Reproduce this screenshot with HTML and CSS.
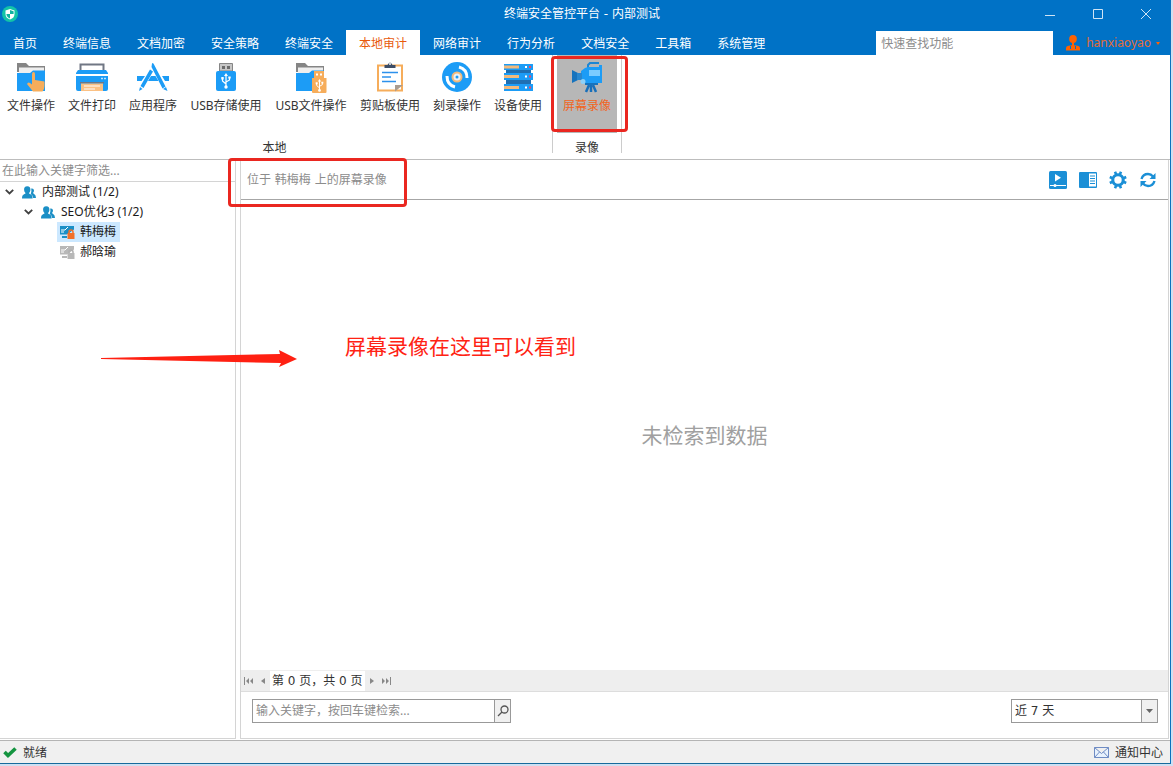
FILE: index.html
```html
<!DOCTYPE html>
<html lang="zh-CN">
<head>
<meta charset="utf-8">
<meta name="viewport" content="width=device-width, initial-scale=1">
<title>终端安全管控平台 - 内部测试</title>
<link rel="stylesheet" href="styles.css">
</head>
<body>
<svg class="defs" aria-hidden="true">
  <symbol id="users" viewBox="0 0 14 13"><path fill="#1b8fc6" d="M9.200 2.500q2.600-.5 2.800 2 0 1.400-.9 2.200.1.800 1 1.200Q14 8.800 14 12h-2.800Q11 9.300 8.800 8 9.900 5 9.200 2.500z"/><path fill="#1b8fc6" d="M5.200.3C7.600.3 8.600 1.800 8.400 3.900 8.300 5.200 7.700 6.200 7 6.900q0 .8 1.100 1.200c1.800.8 2.500 1.600 2.500 4.400H0c0-2.800.7-3.600 2.500-4.400Q3.500 7.700 3.500 6.900 2.200 5.700 2.100 3.900C1.900 1.800 2.900.3 5.200.3z"/></symbol>
  <symbol id="chevron" viewBox="0 0 9 6"><path d="M.8 .8 4.500 4.500 8.200 .8" fill="none" stroke="#404040" stroke-width="1.800"/></symbol>
  <symbol id="folder" viewBox="0 0 28 28"><path fill="#858585" d="M0 0h9l3 3h16v6H0z"/><path fill="#eee" d="M2 4.500h25V12H2z"/><path fill="#1c9cf6" d="M0 10h13l3-2.500h12V28H0z"/></symbol>
  <symbol id="usb-mark" viewBox="0 0 10 16"><path d="M5 2v11M5 11 1.500 8V5M5 9l3.500-2V4.500" fill="none" stroke="#fff" stroke-width="1.200"/><path fill="#fff" d="M5 0l2 3H3zM.3 4h2.400v2.400H.3zM7.300 3.500h2.400v2H7.300z"/><circle cx="5" cy="14" r="1.700" fill="#fff"/></symbol>
</svg>
<div class="window">
  <header class="header">
    <div class="titlebar">
      <svg class="logo" viewBox="0 0 16 16" aria-hidden="true"><circle cx="8" cy="8" r="8" fill="#13c3a8"/><path d="M8 3 12.500 4.500V8q0 4-4.500 5.500Q3.500 12 3.500 8V4.500z" fill="#fff"/><path d="M8 4v4h3.600V5.200zM8 8H4.400q.2 3 3.600 4.500z" fill="#10b2a0"/></svg>
      <h1 class="title">终端安全管控平台 - 内部测试</h1>
      <div class="winbuttons">
        <button class="winbtn" aria-label="最小化"><svg viewBox="0 0 12 12"><path d="M1 7.500h10"/></svg></button>
        <button class="winbtn" aria-label="最大化"><svg viewBox="0 0 12 12"><path d="M1.500 1.500h9v9h-9z"/></svg></button>
        <button class="winbtn" aria-label="关闭"><svg viewBox="0 0 12 12"><path d="M1 1l10 10M11 1 1 11"/></svg></button>
      </div>
    </div>
    <div class="tabrow">
      <nav class="tabs">
        <a class="tab" href="#">首页</a><a class="tab" href="#">终端信息</a><a class="tab" href="#">文档加密</a><a class="tab" href="#">安全策略</a><a class="tab" href="#">终端安全</a><a class="tab active" href="#" aria-current="page">本地审计</a><a class="tab" href="#">网络审计</a><a class="tab" href="#">行为分析</a><a class="tab" href="#">文档安全</a><a class="tab" href="#">工具箱</a><a class="tab" href="#">系统管理</a>
      </nav>
      <input class="quickfind" type="text" placeholder="快速查找功能" aria-label="快速查找功能">
      <button class="user">
        <svg class="avatar" viewBox="0 0 14 16" aria-hidden="true"><ellipse cx="7" cy="4" rx="3.800" ry="3.900"/><path d="M6 7.500h2v2.700l3.500.6Q14 11.300 14 13v2.500H0V13q0-1.700 2.500-2.200l3.500-.6z"/><path d="M4.500 11v3M9.500 11v3" stroke="#0072c6" fill="none"/></svg>
        <span>hanxiaoyao</span>
        <svg class="caret" viewBox="0 0 4 3" aria-hidden="true"><path d="M0 0h4L2 3z"/></svg>
      </button>
    </div>
  </header>

  <section class="ribbon">
    <div class="group local">
      <div class="tools">
        <button class="tool"><svg viewBox="0 0 32 32"><use href="#folder" x="2" y="1" width="28" height="28"/><path fill="#f6ad5b" d="M17 12q0-2 1.500-2t1.500 2v6l9.500 1.500V24q0 3-2 5.500H18l-6-7.500q1-2.500 3-1l2 1.500z"/></svg><span>文件操作</span></button>
        <button class="tool"><svg viewBox="0 0 32 32"><path d="M4.500 9V2.500h23V9" fill="#fff" stroke="#707784" stroke-width="2"/><path fill="#1c9cf6" d="M2 8h28l2 3v1H0v-1zM0 14h32v13q0 2-2 2H2q-2 0-2-2z"/><path fill="#707784" d="M4 20h24v1.500H4z"/><path fill="#fbc184" d="M5 21.500h22V29H5z"/><path d="M8 24h16M8 27h11" stroke="#fff" stroke-width="1.200"/><path d="M25 16.500h2m1 0h2" stroke="#bfe6ff" stroke-width="1.500"/></svg><span>文件打印</span></button>
        <button class="tool"><svg viewBox="0 0 32 32"><g fill="#1c9cf6"><path d="M0 14h8l-3.500 5H0zM14 14h4.500l3 5H11zM25 14h7v5h-4z"/><path d="M13 7.500l3 2L6.500 26l-3-2zM3 25l2.500 2L2 29z"/><path d="M15 1.500q1-1.500 2 1l11.500 22-3 2L14.500 5z"/><path d="M26 27l3-2 1.500 4z"/></g></svg><span>应用程序</span></button>
        <button class="tool w84"><svg viewBox="0 0 32 32"><path d="M9.500 9V1.500h13V9z" fill="#c6c6c6" stroke="#858585"/><path fill="#6a6a6a" d="M12 4h3v3h-3zm5 0h3v3h-3z"/><rect x="6" y="9" width="20" height="20" rx="2" fill="#1c9cf6"/><use href="#usb-mark" x="11" y="11" width="10" height="16"/></svg><span>USB存储使用</span></button>
        <button class="tool w84"><svg viewBox="0 0 32 32"><use href="#folder" x="1" y="1" width="28" height="28"/><path fill="#f6ad5b" d="M19 9h10v7h2.500v14q0 1-1 1H18q-1 0-1-1V16h2z"/><path d="M21 12.500h2m2 0h2" stroke="#fff" stroke-width="2"/><use href="#usb-mark" x="20" y="17" width="9" height="13"/></svg><span>USB文件操作</span></button>
        <button class="tool w72"><svg viewBox="0 0 32 32"><path d="M4 3.500h24V28.500H4z" fill="#fff" stroke="#f6ad5b" stroke-width="2"/><path fill="#3d4d66" d="M10.500 3h3q2.500-5 5 0h3v3h-11z"/><circle cx="16" cy="2" r="1" fill="#fff"/><path d="M8 10.500h16M8 15h9M8 19.500h14" stroke="#2c91ec" stroke-width="1.300"/><path d="M21 29.500V23h8z" fill="#a99c90"/></svg><span>剪贴板使用</span></button>
        <button class="tool"><svg viewBox="0 0 32 32"><circle cx="16" cy="15" r="15" fill="#1c9cf6"/><path d="M6 14q0 9 8 11M18 5q8 2 8 11" fill="none" stroke="#fff" stroke-width="3"/><circle cx="16" cy="15" r="5.500" fill="#f2ba7c"/><circle cx="16" cy="15" r="3.500" fill="#e9f1f8"/><circle cx="16" cy="15" r="1.500" fill="#1c9cf6"/></svg><span>刻录操作</span></button>
        <button class="tool"><svg viewBox="0 0 32 32"><path fill="#1f6fb2" d="M4 7h25v4H4zm0 10h25v5H4z"/><path fill="#1c9cf6" d="M2 2h29v6H2zm0 9h29v7H2zm0 11h29v7H2z"/><path d="M2 5h15M2 14.500h15M2 25.500h15" stroke="#f2ba7c" stroke-width="3"/><path d="M23 5h2M23 14.500h2M23 25.500h2" stroke="#fff" stroke-width="2"/><path d="M27 5h2M27 14.500h2M27 25.500h2" stroke="#ee4767" stroke-width="2"/></svg><span>设备使用</span></button>
      </div>
      <div class="caption">本地</div>
    </div>
    <div class="group video">
      <div class="tools">
        <button class="tool selected"><svg viewBox="0 0 32 32"><path d="M17 7V3l2-2h9" fill="none" stroke="#1d86d3" stroke-width="2"/><path fill="#1c9cf6" d="M14 6l3-1h11V3h3v18H14l-4-3V9z"/><path fill="#1673bd" d="M1 8l6 3v7l-6 3zM14 21h13v2H14z"/><path fill="#2887cf" d="M6 11h5v7H6z"/><path fill="#7acbff" d="M18 8h11v6H18z"/><circle cx="12" cy="19.500" r="2.500" fill="#8ed0f7"/><path d="M18 23l-3 7M20 23v7M22 23l3 7" stroke="#176fba" stroke-width="2.500"/></svg><span>屏幕录像</span></button>
      </div>
      <div class="caption">录像</div>
    </div>
  </section>

  <div class="body">
    <aside class="sidebar">
      <input class="filter" type="text" placeholder="在此输入关键字筛选..." aria-label="在此输入关键字筛选">
      <ul class="tree">
        <li><div class="node"><svg class="chev"><use href="#chevron"/></svg><svg class="people"><use href="#users"/></svg><span class="name">内部测试 (1/2)</span></div>
          <ul>
            <li><div class="node"><svg class="chev"><use href="#chevron"/></svg><svg class="people"><use href="#users"/></svg><span class="name">SEO优化3 (1/2)</span></div>
              <ul class="leaves">
                <li><div class="leaf current"><svg class="pc" viewBox="0 0 15 14"><path fill="#1b8fc6" d="M0 1h14v3.500L7 9.500H0z"/><path d="M1 5h4l3-3M1 7h3" stroke="#fff" fill="none"/><path fill="#1b8fc6" d="M2 11h5v2H2z"/><path d="M9 8.500V7q0-2 2-2t2 2v1.500" fill="none" stroke="#f1702a" stroke-width="1.500"/><path fill="#f1702a" d="M7.500 8h7v6h-7z"/></svg><span>韩梅梅</span></div></li>
                <li><div class="leaf"><svg class="pc" viewBox="0 0 15 14"><path fill="#b8b8b8" d="M0 1h14v3.500L7 9.500H0z"/><path d="M1 5h4l3-3M1 7h3" stroke="#fff" fill="none"/><path fill="#b8b8b8" d="M2 11h5v2H2z"/><path d="M9 8.500V7q0-2 2-2t2 2v1.500" fill="none" stroke="#b0b0b0" stroke-width="1.500"/><path fill="#b8b8b8" d="M7.500 8h7v6h-7z"/></svg><span>郝晗瑜</span></div></li>
              </ul>
            </li>
          </ul>
        </li>
      </ul>
    </aside>
    <main class="main">
      <div class="mainhead">
        <h2 class="where">位于 韩梅梅 上的屏幕录像</h2>
        <div class="actions">
          <button class="act" aria-label="播放"><svg viewBox="0 0 18 18"><rect width="18" height="18" rx="1.500" fill="#1b8fd6"/><path d="M6 3l6 3.700-6 3.700z" fill="#fff"/><path d="M1 14.500h16" stroke="#fff"/><circle cx="6" cy="14.500" r="1.500" fill="#fff"/></svg></button>
          <button class="act" aria-label="预览面板"><svg viewBox="0 0 18 18"><rect y="1" width="18" height="16" rx="1" fill="#1b8fd6"/><path d="M10 2.500h7v13h-7z" fill="#fff"/><path d="M11 5h5M11 7.500h5M11 10h5M11 12.500h5" stroke="#1b8fd6" stroke-width="1.200"/></svg></button>
          <button class="act" aria-label="设置"><svg viewBox="0 0 18 18"><circle cx="9" cy="9" r="5.200" fill="none" stroke="#1b8fd6" stroke-width="3"/><path d="M7.200 3.500 6 .8M10.800 3.500 12 .8M7.200 14.500 6 17.200M10.800 14.500l1.200 2.700M3.500 7.200.8 6M3.500 10.800.8 12M14.500 7.200 17.200 6M14.500 10.800l2.700 1.200" stroke="#1b8fd6" stroke-width="2.600"/></svg></button>
          <button class="act" aria-label="刷新"><svg viewBox="0 0 18 18"><path d="M2.500 8Q4 3 9 3q3 0 5 2.500M15.500 10Q14 15 9 15q-3 0-5-2.500" fill="none" stroke="#1b8fd6" stroke-width="2.400"/><path fill="#1b8fd6" d="M16.500 2v6h-6zM1.500 16v-6h6z"/></svg></button>
        </div>
      </div>
      <div class="empty">未检索到数据</div>
      <div class="pager">
        <button class="pg" aria-label="首页"><svg viewBox="0 0 10 8"><path d="M0 0h1v8H0zM5 1v6L2 4zM9 1v6L6 4z"/></svg></button>
        <button class="pg narrow" aria-label="上一页"><svg viewBox="0 0 4 8"><path d="M4 1v6L0 4z"/></svg></button>
        <span class="pageinfo">第 0 页，共 0 页</span>
        <button class="pg narrow" aria-label="下一页"><svg viewBox="0 0 4 8"><path d="M0 1v6l4-3z"/></svg></button>
        <button class="pg" aria-label="末页"><svg viewBox="0 0 10 8"><path d="M9 0h1v8H9zM1 1v6l3-3zM5 1v6l3-3z"/></svg></button>
      </div>
      <form class="searchrow">
        <div class="search">
          <input class="keyword" type="text" placeholder="输入关键字，按回车键检索..." aria-label="关键字">
          <button class="go" type="button" aria-label="检索"><svg viewBox="0 0 12 12"><circle cx="7.500" cy="4.500" r="3.500"/><path d="M5 7 1 11"/></svg></button>
        </div>
        <div class="range">
          <select class="days" aria-label="时间范围"><option>近 7 天</option></select>
          <span class="drop"><svg viewBox="0 0 7 4"><path d="M0 0h7L3.500 4z"/></svg></span>
        </div>
      </form>
    </main>
  </div>

  <footer class="status">
    <svg class="tick" viewBox="0 0 14 11" aria-hidden="true"><path d="M1.500 5 5 8.500l7.500-7" fill="none" stroke="#149440" stroke-width="3.600"/></svg>
    <span>就绪</span>
    <button class="notice"><svg class="mail" viewBox="0 0 15 11" aria-hidden="true"><path d="M.5 .5h14v10H.5zM.5 .5l7 6 7-6M.5 10.500 5.500 5M14.500 10.500 9.500 5" fill="#e8f2fd" stroke="#6f8cc4"/></svg><span>通知中心</span></button>
  </footer>

  <div class="mark mark-tool"></div>
  <div class="mark mark-where"></div>
  <svg class="arrow" viewBox="0 0 196 18" aria-hidden="true"><path fill="#ff2012" d="M0 9 179 5 178 1 196 10 178 18 180 14 0 10z"/></svg>
  <p class="note">屏幕录像在这里可以看到</p>
</div>
</body>
</html>
```
FILE: styles.css
```css
* { box-sizing: border-box; }
body {
  margin: 0;
  background: #cfe0f2;
  font: 12px/16px "Noto Sans", "Noto Sans CJK SC", sans-serif;
  color: #333;
}
button, input, select { font: inherit; color: inherit; margin: 0; border-radius: 0; }
button { padding: 0; border: 0; background: none; }
input { min-width: 0; outline: 0; }
input::placeholder { color: #8c8c8c; opacity: 1; }
svg { display: block; flex: none; }
ul { list-style: none; margin: 0; padding: 0; }
.defs { position: absolute; width: 0; height: 0; }
.title, .where, .pageinfo, .days { font-family: "DejaVu Sans", "Noto Sans CJK SC", sans-serif; }

.window {
  position: relative;
  display: flex;
  flex-direction: column;
  min-height: calc(100vh - 2px);
  margin-right: 2px;
  background: #fff;
  border-right: 1px solid #0a70bd;
  border-bottom: 1px solid #176a9c;
}

/* Title bar and menu tabs */
.header { background: #0072c6; color: #fff; }
.titlebar { display: grid; grid-template-columns: 1fr auto 1fr; align-items: center; height: 28px; padding-left: 2px; }
.logo { width: 16px; height: 16px; }
.title { margin: 0; padding-right: 8px; font-size: 12px; font-weight: 400; }
.winbuttons { display: flex; justify-content: flex-end; }
.winbtn { display: flex; align-items: center; justify-content: center; width: 48px; height: 28px; }
.winbtn svg { width: 12px; height: 12px; fill: none; stroke: #cfe4f5; }
.tabrow { display: flex; align-items: flex-end; height: 27px; }
.tabs { display: flex; flex: 1; }
.tab { height: 25px; padding: 0 13px; line-height: 28px; color: #fff; text-decoration: none; white-space: nowrap; }
.tab.active { background: #fff; color: #e8590c; }
.quickfind { width: 177px; height: 24px; padding: 0 5px; border: 0; background: #fff; color: #333; }
.user { display: flex; align-items: center; gap: 6px; height: 24px; padding: 0 10px 0 13px; color: #e36b35; }
.avatar { width: 14px; height: 16px; fill: #ff6200; }
.caret { width: 4px; height: 3px; fill: #ff6200; margin-left: -1px; }

/* Ribbon */
.ribbon { display: flex; height: 105px; border-bottom: 1px solid #bdbdbd; }
.group { display: flex; flex-direction: column; }
.group.local { padding: 0 4px 0 1px; }
.group.video {
  padding: 0 5px;
  background:
    linear-gradient(#ccc, #ccc) 0 0 / 1px 98px no-repeat,
    linear-gradient(#ccc, #ccc) 100% 0 / 1px 98px no-repeat;
}
.tools { display: flex; gap: 1px; }
.tool { display: flex; flex-direction: column; align-items: center; gap: 4px; width: 60px; height: 78px; padding-top: 7px; white-space: nowrap; }
.tool svg { width: 32px; height: 32px; }
.tool.w84 { width: 84px; }
.tool.w72 { width: 72px; }
.tool.selected { background: #b7b7b7; color: #f26522; }
.caption { padding-top: 7px; text-align: center; }

/* Workspace */
.body { display: flex; flex: 1; gap: 4px; padding: 0 1px 1px 0; }
.sidebar { width: 236px; border: solid #d4d4d4; border-width: 0 1px 1px 0; }
.filter { display: block; width: 100%; height: 22px; padding: 0 2px; border: 0; border-bottom: 1px solid #d4d4d4; background: none; }
.tree { color: #1a1a1a; }
.tree ul { padding-left: 19px; }
.tree .leaves { padding-left: 38px; }
.node { display: flex; align-items: center; height: 20px; padding-left: 5px; }
.chev { width: 9px; height: 6px; margin-right: 8px; }
.people { width: 14px; height: 13px; margin-right: 6px; }
.leaf { display: flex; align-items: center; gap: 5px; width: max-content; height: 20px; padding: 0 4px 0 3px; }
.leaf.current { background: #cce8ff; }
.pc { width: 15px; height: 14px; }

.main { display: flex; flex: 1; flex-direction: column; min-width: 0; border: solid #d4d4d4; border-width: 0 1px 1px 1px; }
.mainhead { display: flex; align-items: center; justify-content: space-between; height: 40px; padding: 0 11px 0 6px; border-bottom: 1px solid #a6a6a6; }
.where { margin: 0; font-size: 12px; font-weight: 400; color: #8c8c8c; }
.actions { display: flex; gap: 12px; }
.act svg { width: 18px; height: 18px; }
.empty { display: flex; flex: 1; align-items: center; justify-content: center; font-size: 21px; line-height: 28px; color: #a0a0a0; }
.pager { display: flex; align-items: center; gap: 7px; height: 22px; padding-left: 3px; background: #eee; border-bottom: 1px solid #ddd; }
.pg svg { width: 10px; height: 8px; fill: #888; }
.pg.narrow svg { width: 4px; }
.pageinfo { padding: 0 2px; margin: 0 -2px; background: #fff; line-height: 20px; }
.searchrow { display: flex; justify-content: space-between; height: 46px; padding: 7px 10px 15px 11px; }
.search { display: flex; width: 259px; border: 1px solid #999; }
.keyword { flex: 1; padding: 0 3px; border: 0; background: none; }
.go { display: flex; align-items: center; justify-content: center; width: 16px; background: #f0f0f0; border-left: 1px solid #999; }
.go svg { width: 12px; height: 12px; fill: none; stroke: #555; stroke-width: 1.300; }
.range { display: grid; grid-template-columns: 1fr 16px; width: 147px; border: 1px solid #999; }
.days { grid-area: 1 / 1 / 2 / 3; appearance: none; padding: 0 3px; border: 0; background: none; }
.drop { grid-area: 1 / 2; display: flex; align-items: center; justify-content: center; background: #f0f0f0; border-left: 1px solid #999; pointer-events: none; }
.drop svg { width: 7px; height: 4px; fill: #666; }

/* Status bar */
.status { display: flex; align-items: center; gap: 6px; height: 23px; padding: 1px 7px 0 3px; background: #f0f0f0; border-top: 1px solid #b4b4b4; }
.tick { width: 14px; height: 11px; }
.notice { display: flex; align-items: center; gap: 6px; margin-left: auto; }
.mail { width: 15px; height: 11px; }

/* Red annotations over the window */
.mark { position: absolute; border: 3px solid #ea2720; border-radius: 4px; pointer-events: none; }
.mark-tool { left: 551px; top: 56px; width: 77px; height: 76px; }
.mark-where { left: 228px; top: 158px; width: 179px; height: 49px; }
.arrow { position: absolute; left: 101px; top: 349px; width: 196px; height: 18px; }
.note { position: absolute; left: 345px; top: 332px; margin: 0; font-size: 21px; line-height: 28px; color: #ff2314; white-space: nowrap; }
```
